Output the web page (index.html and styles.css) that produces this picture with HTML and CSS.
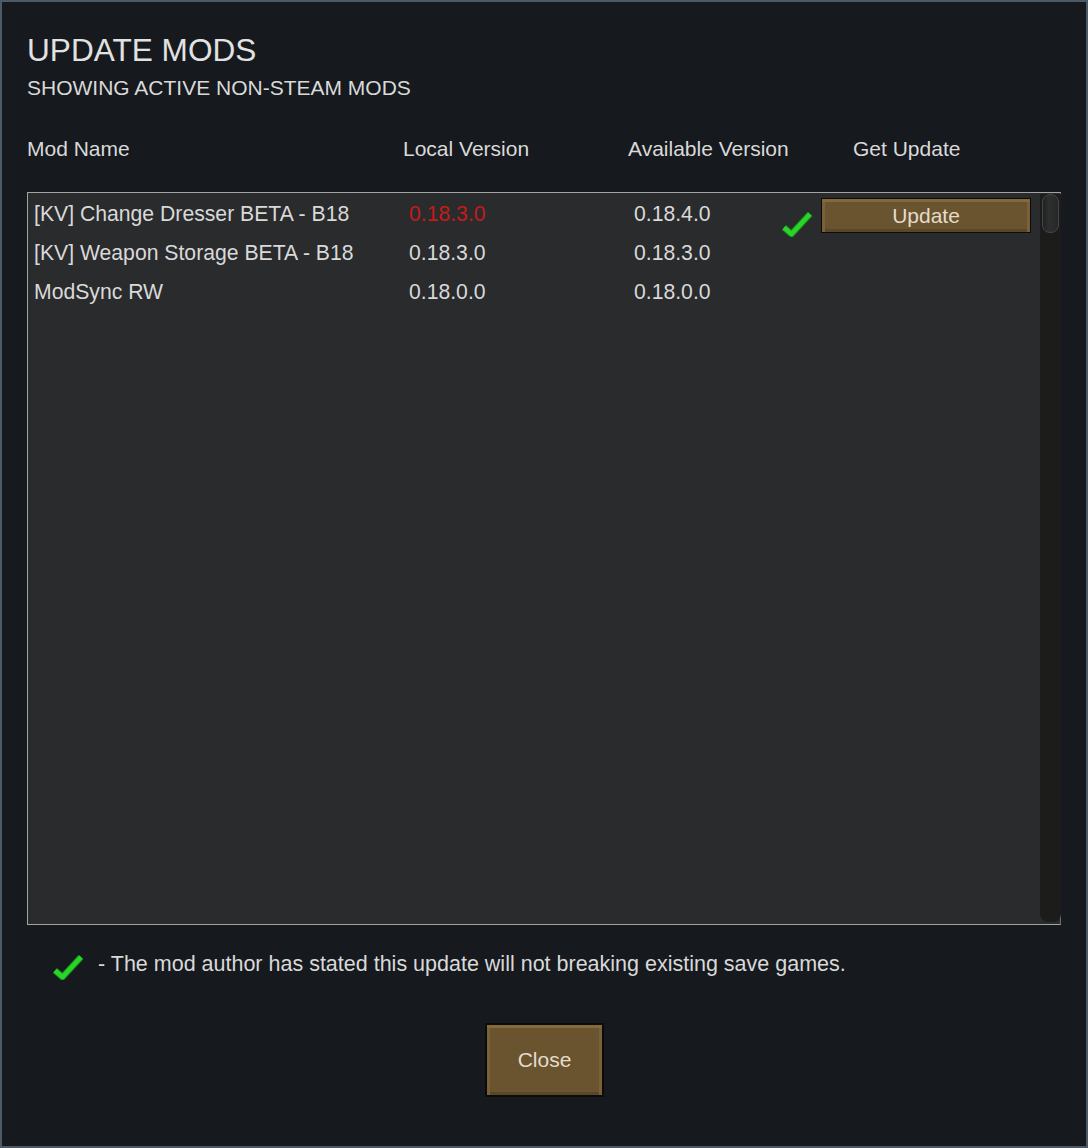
FILE: index.html
```html
<!DOCTYPE html>
<html>
<head>
<meta charset="utf-8">
<link rel="stylesheet" href="styles.css">
</head>
<body>
<div class="window">
  <h1 class="title">UPDATE MODS</h1>
  <div class="subtitle">SHOWING ACTIVE NON-STEAM MODS</div>
  <div class="headers">
    <span>Mod Name</span>
    <span>Local Version</span>
    <span>Available Version</span>
    <span>Get Update</span>
  </div>
  <div class="list">
    <div class="rows">
      <div class="row">
        <span class="name">[KV] Change Dresser BETA - B18</span>
        <span class="ver outdated">0.18.3.0</span>
        <span class="ver">0.18.4.0</span>
        <span class="check-cell">
          <svg class="check" viewBox="0 0 32 27" width="32" height="27"><path d="M3 17.5 L10.5 24 L29 4" fill="none" stroke="#1a8a1a" stroke-width="6.5" stroke-linejoin="round"/><path d="M3 17.5 L10.5 24 L29 4" fill="none" stroke="#2ad52a" stroke-width="4.5" stroke-linejoin="round"/></svg>
        </span>
        <span class="btn-cell"><button class="btn update">Update</button></span>
      </div>
      <div class="row">
        <span class="name">[KV] Weapon Storage BETA - B18</span>
        <span class="ver">0.18.3.0</span>
        <span class="ver">0.18.3.0</span>
        <span></span><span></span>
      </div>
      <div class="row">
        <span class="name">ModSync RW</span>
        <span class="ver">0.18.0.0</span>
        <span class="ver">0.18.0.0</span>
        <span></span><span></span>
      </div>
    </div>
    <div class="scrollbar"><div class="thumb"></div></div>
  </div>
  <div class="legend">
    <svg class="check" viewBox="0 0 32 27" width="32" height="27"><path d="M3 17.5 L10.5 24 L29 4" fill="none" stroke="#1a8a1a" stroke-width="6.5" stroke-linejoin="round"/><path d="M3 17.5 L10.5 24 L29 4" fill="none" stroke="#2ad52a" stroke-width="4.5" stroke-linejoin="round"/></svg>
    <span>- The mod author has stated this update will not breaking existing save games.</span>
  </div>
  <div class="footer">
    <button class="btn close">Close</button>
  </div>
</div>
</body>
</html>
```

FILE: styles.css
```css
html, body {
  margin: 0;
  padding: 0;
}
body {
  background: #4e5966;
  width: 1088px;
  height: 1148px;
  font-family: "Liberation Sans", Arial, sans-serif;
  color: #d9d9d9;
}
.window {
  margin: 2px;
  height: 1144px;
  box-sizing: border-box;
  background: #16191e;
  padding: 30px 25px 0 25px;
  display: flex;
  flex-direction: column;
}
.title {
  margin: 0;
  font-size: 31.6px;
  line-height: 36px;
  font-weight: normal;
  color: #e2e2e2;
}
.subtitle {
  margin: 8px 0 0 0;
  font-size: 21px;
  line-height: 24px;
}
.headers {
  margin-top: 37px;
  padding-left: 0;
  display: grid;
  grid-template-columns: 376px 225px 225px 1fr;
  font-size: 21px;
  line-height: 24px;
}
.list {
  margin-top: 31px;
  height: 733px;
  box-sizing: border-box;
  border: 1px solid #a3a3a3;
  border-right-color: #6e6e6e;
  background: #2a2b2d;
  display: flex;
}
.rows {
  flex: 1;
  padding: 1px 0 0 6px;
}
.row {
  display: grid;
  grid-template-columns: 375px 225px 147px 40px 210px;
  height: 39px;
  font-size: 21.2px;
  line-height: 39px;
}
.ver {
  color: #d9d9d9;
}
.outdated {
  color: #c41b1b;
}
.check-cell {
  display: flex;
  align-items: flex-start;
}
.check-cell .check {
  margin-top: 16px;
}
.btn-cell {
  display: flex;
  align-items: flex-start;
}
.btn {
  font-family: "Liberation Sans", Arial, sans-serif;
  font-size: 21px;
  color: #e4dccb;
  background: #6a532f;
  border: 1px solid #0b0b0a;
  box-shadow: inset 0 3px 0 #84693b, inset 3px 0 0 #78603a, inset -3px 0 0 #7a6038, inset 0 -3px 0 #5a4628;
  padding: 0;
  cursor: pointer;
}
.update {
  margin-top: 4px;
  width: 210px;
  height: 35px;
  line-height: 33px;
}
.scrollbar {
  width: 21px;
  margin: 1px -1px 2px 0;
  background: #1c1d1b;
  border-radius: 0 0 8px 8px;
  padding: 0 2px;
  box-sizing: border-box;
}
.thumb {
  height: 39px;
  border-radius: 8px;
  background: linear-gradient(to right, #202121, #2e2f30 40%, #262727);
  border: 1px solid #444546;
  box-sizing: border-box;
}
.legend {
  margin-top: 28px;
  margin-left: 25px;
  display: flex;
  align-items: center;
  gap: 14px;
  font-size: 21.5px;
  height: 27px;
}
.legend span {
  margin-top: -4px;
}
.footer {
  display: flex;
  justify-content: center;
  margin-top: 43px;
}
.close {
  width: 119px;
  height: 74px;
  margin-left: 1px;
  border-width: 2px;
}
```
